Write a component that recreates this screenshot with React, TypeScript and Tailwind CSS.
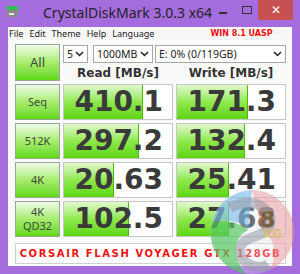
import React from 'react';

const ui = { fontFamily: '"Noto Sans", "Open Sans", sans-serif' };
const num = { fontFamily: '"DejaVu Sans", Verdana, sans-serif' };
const tech = { fontFamily: '"DejaVu Sans", sans-serif' };

type Row = { label: string[]; read: string; write: string; rw: number; ww: number };

const rows: Row[] = [
  { label: ['Seq'], read: '410.1', write: '171.3', rw: 79, ww: 71 },
  { label: ['512K'], read: '297.2', write: '132.4', rw: 75, ww: 68 },
  { label: ['4K'], read: '20.63', write: '25.41', rw: 50, ww: 52 },
  { label: ['4K', 'QD32'], read: '102.5', write: '27.68', rw: 65, ww: 52 },
];

function GreenButton({ lines }: { lines: string[] }) {
  return (
    <div
      className="w-[45px] h-[36px] shrink-0 flex flex-col items-center justify-center border border-[#9aa59a] bg-gradient-to-b from-[#eefbe6] via-[#a8ec6c] to-[#5fd80a] text-[#3a4a3a] text-[11px] leading-[14px]"
      style={ui}
    >
      {lines.map((l) => (
        <span key={l}>{l}</span>
      ))}
    </div>
  );
}

function ValueBox({ value, fill }: { value: string; fill: number }) {
  return (
    <div className="relative w-[110px] h-[36px] shrink-0 border border-[#c6c6c6] bg-white overflow-hidden">
      <div
        className="absolute left-0 top-0 bottom-0 bg-gradient-to-b from-[#e2f8cc] via-[#8fe84a] to-[#5cd60a] border-r border-[#4cb800]"
        style={{ width: fill }}
      />
      <div
        className="relative h-full flex items-center justify-end pr-[9px] text-[28px] font-bold text-[#3a3a3a] leading-none"
        style={num}
      >
        {value}
      </div>
    </div>
  );
}

function Select({ w, text }: { w: string; text: string }) {
  return (
    <div
      className={`${w} h-[18px] shrink-0 border border-[#a8a8a8] bg-white flex items-center justify-between pl-[3px] pr-[3px] text-[10.5px] text-[#222] whitespace-nowrap`}
      style={ui}
    >
      <span className="leading-none">{text}</span>
      <svg width="9" height="6" viewBox="0 0 9 6">
        <path d="M1 1 L4.5 4.5 L8 1" stroke="#222" strokeWidth="1.5" fill="none" />
      </svg>
    </div>
  );
}

function Logo() {
  return (
    <svg className="absolute left-[208px] top-[188px]" width="92" height="88" viewBox="0 0 92 88">
      <circle cx="44" cy="44" r="42" fill="#e4e4ee" opacity="0.3" />
      <path d="M44 2 A42 42 0 0 0 4 34 C20 30 34 34 40 42 Z" fill="#6ab4e8" opacity="0.55" />
      <path d="M4 34 A42 42 0 0 0 38 86 C26 72 22 52 40 42 C30 34 18 32 4 34 Z" fill="#3cc24a" opacity="0.6" />
      <path d="M44 2 A42 42 0 0 1 62 82 C70 64 66 50 54 42 Z" fill="#e88080" opacity="0.4" />
      <path d="M22 20 C40 8 66 18 62 36 C58 52 30 46 32 64 C34 78 52 82 60 76" stroke="#9499a2" strokeWidth="10" fill="none" opacity="0.55" />
      <text x="52" y="39" fontSize="22" fontWeight="bold" fill="#6b5a2a" opacity="0.8" fontFamily="DejaVu Sans, sans-serif">8</text>
      <text x="55" y="50" fontSize="12" fontWeight="bold" fill="#d8c070" opacity="0.85" fontFamily="DejaVu Sans, sans-serif">KG</text>
    </svg>
  );
}

export default function App() {
  return (
    <div className="relative w-[300px] h-[274px] bg-[#a56cde] flex flex-col overflow-hidden">
      {/* Title bar */}
      <div className="h-[27px] flex items-start shrink-0">
        <div className="ml-[7px] mt-[6px] w-[11px] h-[11px] shrink-0 flex flex-col">
          <div className="h-[4px] bg-[#2fbf4f]" />
          <div className="h-[7px] bg-[#8a8a8a] flex items-center pl-[2px]">
            <div className="w-[5px] h-[2px] bg-[#e8e8e8]" />
          </div>
        </div>
        <div className="ml-[25px] mt-[3px] text-[14px] text-[#222] leading-[20px] whitespace-nowrap shrink-0" style={ui}>
          CrystalDiskMark 3.0.3 x64
        </div>
        <div className="flex-1" />
        <div className="w-[8px] h-[2px] bg-[#333] mt-[12px] mr-[15px] shrink-0" />
        <div className="w-[10px] h-[8px] border border-[#333] mt-[6px] mr-[6px] shrink-0" />
        <div className="w-[35px] h-[20px] shrink-0 bg-[#c75050] flex items-center justify-center text-white text-[12px] mr-[7px]" style={ui}>
          ✕
        </div>
      </div>

      {/* Client area */}
      <div className="mx-[8px] h-[239px] bg-[#fafafa] flex flex-col">
        <div className="h-[13px] flex items-center bg-[#f7f7f7] text-[9px] text-[#222] leading-none whitespace-nowrap" style={ui}>
          <span className="ml-[1px]">File</span>
          <span className="ml-[6px]">Edit</span>
          <span className="ml-[6px]">Theme</span>
          <span className="ml-[6px]">Help</span>
          <span className="ml-[6px]">Language</span>
          <span className="ml-[56px] text-[#ee1111] text-[8px] font-bold" style={tech}>
            WIN 8.1 UASP
          </span>
        </div>

        <div className="pl-[7px] pt-[4px] flex flex-col gap-[3px]">
          <div className="flex gap-[3px]">
            <div
              className="w-[45px] h-[37px] shrink-0 flex items-center justify-center border border-[#9aa59a] bg-gradient-to-b from-[#eefbe6] via-[#a8ec6c] to-[#5fd80a] text-[#3a4a3a] text-[13px]"
              style={ui}
            >
              All
            </div>
            <div className="w-[223px] flex flex-col">
              <div className="flex mt-[1px]">
                <Select w="w-[25px]" text="5" />
                <div className="ml-[5px]"><Select w="w-[60px]" text="1000MB" /></div>
                <div className="ml-[2px]"><Select w="w-[131px]" text="E: 0% (0/119GB)" /></div>
              </div>
              <div className="flex mt-[2px] h-[16px] items-center text-[12px] font-bold text-[#333] whitespace-nowrap" style={num}>
                <div className="w-[110px] text-center">Read [MB/s]</div>
                <div className="w-[3px]" />
                <div className="w-[110px] text-center">Write [MB/s]</div>
              </div>
            </div>
          </div>

          {rows.map((r) => (
            <div key={r.read} className="flex gap-[3px]">
              <GreenButton lines={r.label} />
              <ValueBox value={r.read} fill={r.rw} />
              <ValueBox value={r.write} fill={r.ww} />
            </div>
          ))}

          <div
            className="mt-[3px] w-[271px] h-[21px] border border-[#d0d0d0] bg-white flex items-center justify-center text-[#ee1111] text-[10px] font-bold tracking-[1.6px] whitespace-nowrap"
            style={tech}
          >
            CORSAIR FLASH VOYAGER GTX 128GB
          </div>
        </div>
      </div>

      <Logo />
    </div>
  );
}
